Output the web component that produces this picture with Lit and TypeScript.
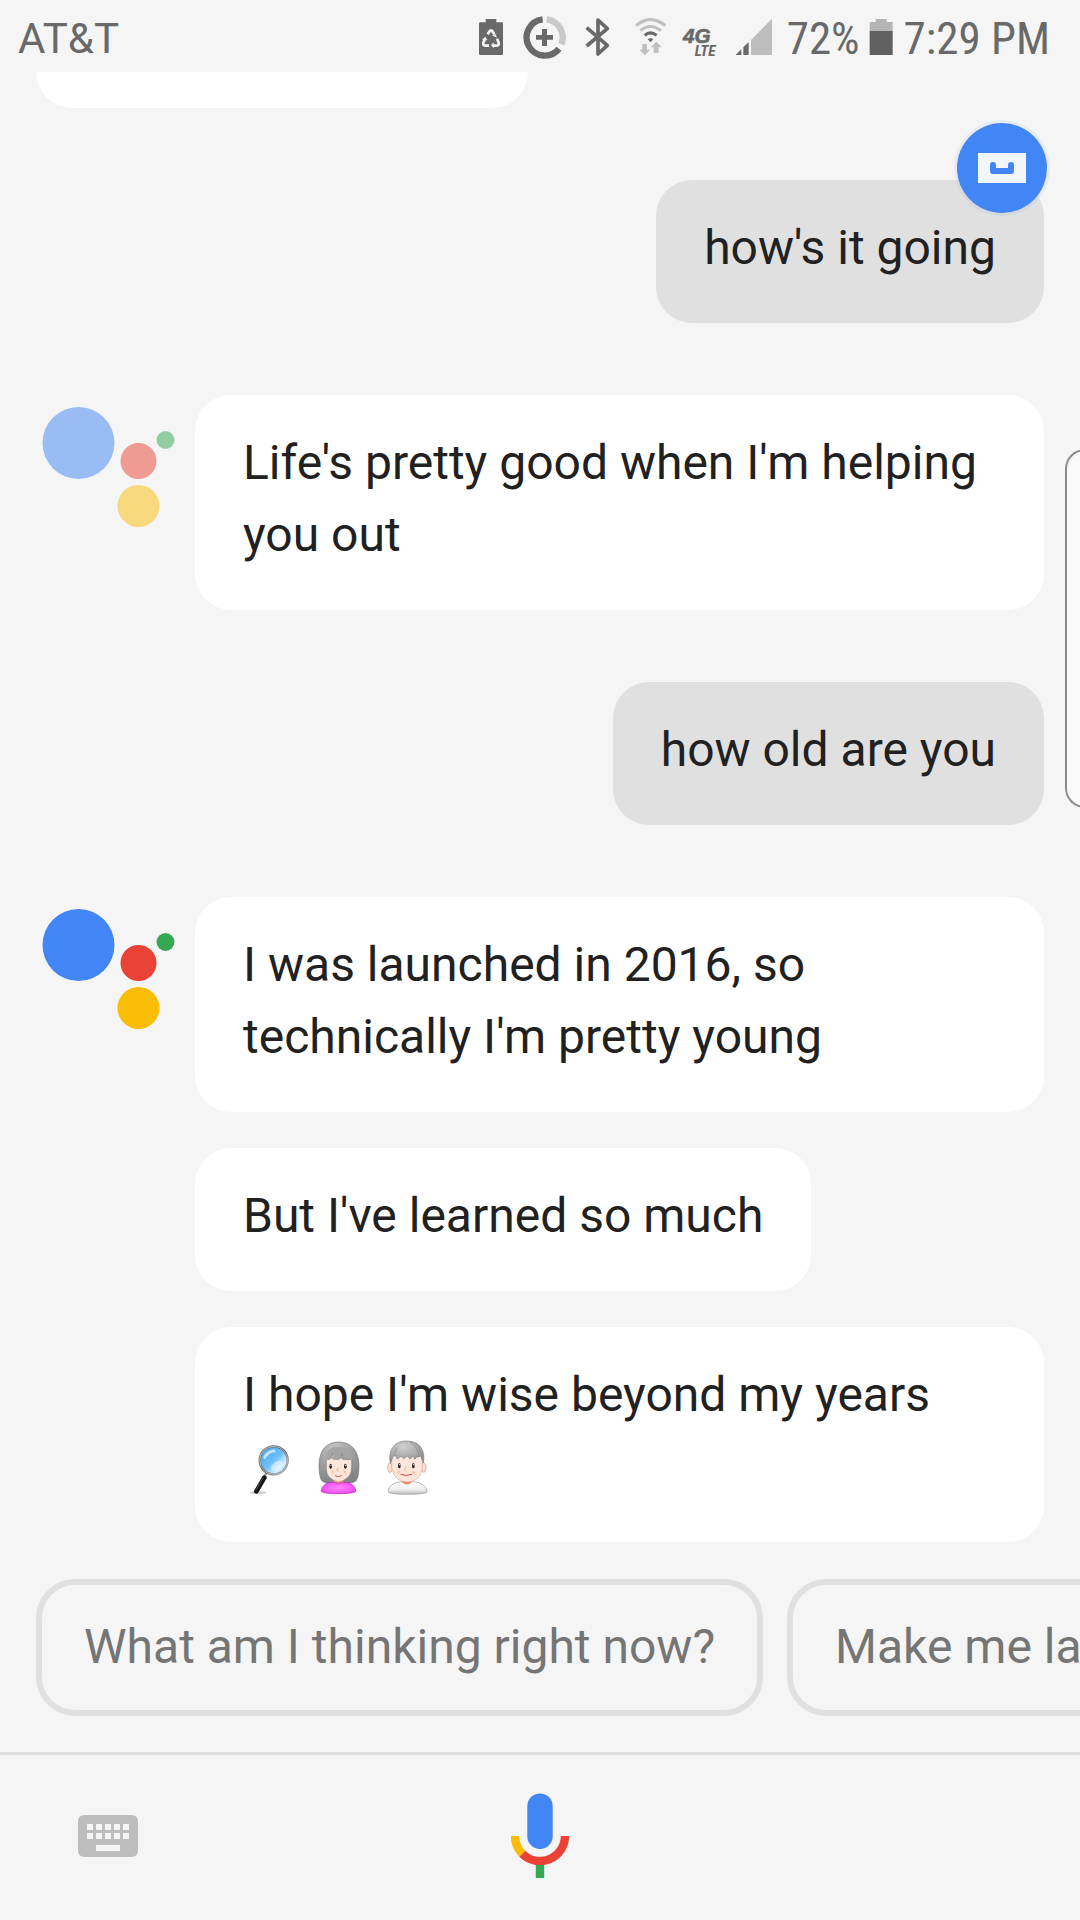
import { LitElement, html, css, svg } from "lit";
import { customElement, property } from "lit/decorators.js";

type Entry =
  | { from: "user"; lines: string[] }
  | { from: "assistant"; lines: string[]; faded?: boolean; emoji?: boolean };

const conversation: Entry[] = [
  { from: "user", lines: ["how's it going"] },
  { from: "assistant", faded: true, lines: ["Life's pretty good when I'm helping you out"] },
  { from: "user", lines: ["how old are you"] },
  {
    from: "assistant",
    emoji: true,
    lines: [
      "I was launched in 2016, so technically I'm pretty young",
      "But I've learned so much",
      "I hope I'm wise beyond my years",
    ],
  },
];

const suggestions = ["What am I thinking right now?", "Make me laugh"];

@customElement("status-bar")
export class StatusBar extends LitElement {
  static styles = css`
    :host {
      display: flex;
      align-items: center;
      height: 72px;
      box-sizing: border-box;
      padding: 2px 30px 0 18px;
      color: #696969;
      font-family: Roboto, sans-serif;
      font-size: 42px;
      line-height: 48px;
      white-space: nowrap;
    }
    .carrier {
      flex: 1;
      padding-top: 4px;
    }
    .tray {
      display: flex;
      align-items: center;
      gap: 9px;
    }
    .icon {
      width: 44px;
      height: 44px;
      display: block;
    }
    .battery {
      width: 26px;
      height: 44px;
      display: block;
    }
    .narrow {
      padding-top: 4px;
      font-family: "Roboto Condensed", "Liberation Sans Narrow", Roboto, sans-serif;
      font-size: 45px;
    }
    .net {
      font-family: "Liberation Sans", Arial, sans-serif;
      font-weight: bold;
      font-style: italic;
    }
    .lte {
      font-family: "Roboto Condensed", "Liberation Sans Narrow", sans-serif;
      font-weight: bold;
      font-style: italic;
    }
  `;

  render() {
    return html`
      <span class="carrier">AT&amp;T</span>
      <div class="tray">
        <svg class="icon" viewBox="27 45 132 132" role="img" aria-label="Power saving">
          <path fill="#696969" d="M77 57h32v10h16q4 0 4 4v90q0 4-4 4H61q-4 0-4-4V71q0-4 4-4h16z" />
          <g fill="none" stroke="#f5f5f5" stroke-width="8" stroke-linejoin="round">
            <path d="M83 103l7-11h6l7 11" />
            <path d="M75 116l-5 12q-2 8 6 9h11" />
            <path d="M111 116l5 12q2 8-6 9H99" />
          </g>
          <path fill="#f5f5f5" d="M96 106l12-3 2 10zM66 119l10-9 6 11zM101 127v18l-8-9z" />
        </svg>
        <svg class="icon" viewBox="186 45 132 132" role="img" aria-label="Data saver">
          <g fill="none" stroke-width="19">
            <path stroke="#696969" d="M248 58A54.500 54.500 0 1 0 297 146" />
            <path stroke="#c9c9c9" d="M260 58A54.500 54.500 0 0 1 304 133" />
          </g>
          <path fill="#696969" d="M246 87h15v18h18v14h-18v19h-15v-19h-18v-14h18z" />
        </svg>
        <svg class="icon" viewBox="345 45 132 132" role="img" aria-label="Bluetooth">
          <path
            fill="none"
            stroke="#696969"
            stroke-width="11"
            stroke-linejoin="round"
            d="M380 83l62 53-28 26V60l28 26-62 52"
          />
        </svg>
        <svg class="icon" viewBox="504 45 132 132" role="img" aria-label="Wi-Fi">
          <g fill="none" stroke-width="9">
            <path stroke="#c0c0c0" d="M528 77q43-36 88 0" />
            <path stroke="#c0c0c0" d="M541 92q30-25 62 0" />
            <path stroke="#696969" d="M554 106q17-15 36 0" />
          </g>
          <path fill="#696969" d="M563 118q9-7 17 0l-8 9z" />
          <path fill="#c0c0c0" d="M547 132h14v17h10l-17 17-16-17h9zM581 159v-17h-9l17-17 16 17h-9v17z" />
        </svg>
        <svg class="icon" viewBox="663 45 132 132" role="img" aria-label="4G LTE">
          <text class="net" x="669" y="130" font-size="62" fill="#696969" stroke="#696969" stroke-width="2">4G</text>
          <text class="lte" x="704" y="168" font-size="46" fill="#696969">LTE</text>
        </svg>
        <svg class="icon" viewBox="822 45 132 132" role="img" aria-label="Signal strength">
          <path fill="#bdbdbd" d="M873 120L936 56V165H873z" />
          <path fill="#696969" d="M827 165l17-17v17zM850 142l16-16v39h-16z" />
        </svg>
        <span class="narrow">72%</span>
        <svg class="battery" viewBox="322 45 78 132" role="img" aria-label="Battery">
          <path fill="#b5b5b5" d="M342 57h33v9h18v29h-69V66h18z" />
          <path fill="#606060" d="M324 93h69v72h-69z" />
        </svg>
        <span class="narrow">7:29 PM</span>
      </div>
    `;
  }
}

@customElement("assistant-mark")
export class AssistantMark extends LitElement {
  @property({ type: Boolean, reflect: true }) faded = false;

  static styles = css`
    :host {
      display: block;
      flex: none;
      width: 159px;
    }
    :host([faded]) {
      opacity: 0.5;
    }
    .dots {
      display: block;
      width: 144px;
      height: 144px;
    }
  `;

  render() {
    return html`
      <svg class="dots" viewBox="0 0 144 144" role="img" aria-label="Assistant">
        <circle cx="42.500" cy="48" r="36" fill="#4285f4" />
        <circle cx="102.500" cy="66" r="18" fill="#ea4335" />
        <circle cx="129.500" cy="45" r="9" fill="#34a853" />
        <circle cx="102.500" cy="111" r="21" fill="#fbbc05" />
      </svg>
    `;
  }
}

const magnifier = svg`
  <defs>
    <linearGradient id="lens" x1="0" y1="0" x2="1" y2="1">
      <stop offset="0" stop-color="#3aa0ee" /><stop offset=".5" stop-color="#6cc0fb" />
      <stop offset=".75" stop-color="#d6f0ff" /><stop offset="1" stop-color="#8fd0fb" />
    </linearGradient>
    <linearGradient id="rim" x1="0" y1="0" x2="1" y2="1">
      <stop offset="0" stop-color="#8c8c8c" /><stop offset=".5" stop-color="#5c5c5c" />
      <stop offset="1" stop-color="#a8a8a8" />
    </linearGradient>
  </defs>
  <ellipse cx="204" cy="518" rx="25" ry="5" fill="#000" opacity=".18" />
  <path d="M229 458l-8 16" stroke="#9a9a9a" stroke-width="7" />
  <path d="M223 473l-24 41" stroke="#151515" stroke-width="14" stroke-linecap="round" />
  <path d="M219 474l-21 36" stroke="#555" stroke-width="3" />
  <circle cx="251" cy="421" r="42" fill="url(#lens)" stroke="url(#rim)" stroke-width="7" />
  <circle cx="251" cy="421" r="42" fill="none" stroke="#d8d8d8" stroke-width="2" />
  <path d="M219 414q7-23 34-26l5 8q-22 1-33 22z" fill="#fff" opacity=".65" />
  <ellipse cx="260" cy="437" rx="20" ry="11" fill="#fff" opacity=".45" transform="rotate(-35 260 437)" />
`;

const woman = svg`
  <defs>
    <radialGradient id="bob" cx=".4" cy=".2" r=".8">
      <stop offset="0" stop-color="#c9c9c9" /><stop offset=".5" stop-color="#a3a3a3" />
      <stop offset="1" stop-color="#858585" />
    </radialGradient>
    <radialGradient id="top">
      <stop offset="0" stop-color="#ff86ff" /><stop offset="1" stop-color="#f04df0" />
    </radialGradient>
  </defs>
  <path d="M387 434C388 391 409 366 446 366s60 25 61 68q0 36-9 49-10 8-25 5h-53q-16 3-25-6-8-14-8-48z" fill="url(#bob)" stroke="#777" stroke-width="2" />
  <path d="M431 475h29v15q-14 10-29 0z" fill="#e99a7e" />
  <path d="M393 513q5-26 37-27 15 9 31 0 32 1 37 27-4 8-53 8-48 0-52-8z" fill="url(#top)" stroke="#b31fbd" stroke-width="2" />
  <path d="M409 416h75v30q-4 33-38 38-34-5-37-38z" fill="#fce5da" />
  <path d="M409 420V396l20-16 38 2 17 18v20q-14 0-25-2l-6-17-5 18q-12 2-22-1l4-16-12 18z" fill="#a5a5a5" />
  <path d="M418 418q8-8 10-20M450 417q3-8 5-16M455 401l4 17h24M409 419l-1 64M486 419l1 64" fill="none" stroke="#7d7d7d" stroke-width="2" />
  <ellipse cx="422" cy="439" rx="4" ry="8" fill="#2c211d" /><circle cx="423" cy="436" r="2" fill="#fff" />
  <ellipse cx="466" cy="439" rx="4" ry="8" fill="#2c211d" /><circle cx="467" cy="436" r="2" fill="#fff" />
  <path d="M446 444l-6 5 5 6M427 461l6-5M424 456l7-4M461 456l6 5M460 452l8 4" fill="none" stroke="#d9a052" stroke-width="2" />
  <path d="M435 467q11 6 20 0" fill="none" stroke="#e05048" stroke-width="3" />
`;

const man = svg`
  <defs>
    <radialGradient id="crop" cx=".4" cy=".25" r=".8">
      <stop offset="0" stop-color="#d0d0d0" /><stop offset=".6" stop-color="#aaa" />
      <stop offset="1" stop-color="#888" />
    </radialGradient>
    <linearGradient id="shirt" x1="0" y1="0" x2="0" y2="1">
      <stop offset="0" stop-color="#fff" /><stop offset=".6" stop-color="#f1f1f1" />
      <stop offset="1" stop-color="#bbb" />
    </linearGradient>
  </defs>
  <path d="M594 515q4-28 42-30 14 9 31 0 40 2 45 30-7 8-59 8-53 0-59-8z" fill="url(#shirt)" stroke="#999" stroke-width="2" />
  <path d="M636 475h29v12q-14 13-29 0z" fill="#e58a66" />
  <ellipse cx="600" cy="443" rx="7" ry="14" fill="#fbdccd" stroke="#c99a85" stroke-width="2" />
  <ellipse cx="701" cy="443" rx="7" ry="14" fill="#fbdccd" stroke="#c99a85" stroke-width="2" />
  <path d="M605 405h92v40q-4 26-22 35-25 13-50-2-16-11-20-33z" fill="#fce5da" stroke="#d5ac98" stroke-width="2" />
  <path d="M601 430c-6-32 5-67 49-67 40 0 57 28 50 66l-8-21-13 4-4 5-6-8-9 8-8-9-11 8-8-8-11 9-5-11-8 3z" fill="url(#crop)" stroke="#7c7c7c" stroke-width="2" />
  <path d="M660 366q25 15 27 43M674 370q17 14 21 36M613 405q2-14 9-22" fill="none" stroke="#858585" stroke-width="2" />
  <ellipse cx="628" cy="437" rx="4" ry="8" fill="#2c211d" /><circle cx="629" cy="434" r="2" fill="#fff" />
  <ellipse cx="670" cy="437" rx="4" ry="8" fill="#2c211d" /><circle cx="671" cy="434" r="2" fill="#fff" />
  <path d="M648 440l-4 9 5 4M620 458l8-5M624 463l7-6M668 454l8 5M667 458l5 5" fill="none" stroke="#d9a052" stroke-width="2" />
  <path d="M632 463q17 7 34 0" fill="none" stroke="#e04438" stroke-width="3" />
`;

@customElement("emoji-row")
export class EmojiRow extends LitElement {
  static styles = css`
    :host {
      display: flex;
      align-items: center;
      gap: 13px;
      height: 72px;
    }
    .emoji {
      width: 56px;
      height: 60px;
    }
  `;

  render() {
    return html`
      <svg class="emoji" viewBox="159 351 168 180" fill="none" role="img" aria-label="Magnifying glass">${magnifier}</svg>
      <svg class="emoji" viewBox="366 351 168 180" role="img" aria-label="Old woman">${woman}</svg>
      <svg class="emoji" viewBox="573 351 168 180" role="img" aria-label="Old man">${man}</svg>
    `;
  }
}

@customElement("app-root")
export class AppRoot extends LitElement {
  static styles = css`
    :host {
      display: flex;
      flex-direction: column;
      position: relative;
      min-height: 100vh;
      overflow: hidden;
      background: #f5f5f5;
      color: #212121;
      font-family: Roboto, sans-serif;
      font-size: 48px;
      line-height: 72px;
    }
    .chat {
      flex: 1;
      display: flex;
      flex-direction: column;
      gap: 72px;
      padding: 0 36px;
    }
    .earlier {
      width: 492px;
      height: 36px;
      border-radius: 0 0 36px 36px;
      background: #fff;
    }
    .turn {
      display: flex;
    }
    .user {
      justify-content: flex-end;
    }
    .replies {
      flex: 1;
      display: flex;
      flex-direction: column;
      align-items: flex-start;
      gap: 36px;
    }
    .bubble {
      padding: 32px 48px 39px;
      border-radius: 36px;
      background: #fff;
    }
    .wide {
      align-self: stretch;
    }
    .user .bubble {
      background: #e0e0e0;
    }
    .text {
      margin: 0;
    }
    .chips {
      display: flex;
      gap: 24px;
      padding: 36px;
      overflow: hidden;
    }
    .chip {
      flex: none;
      margin: 0;
      padding: 26px 42px 27px;
      border: 6px solid #e0e0e0;
      border-radius: 39px;
      background: none;
      color: #757575;
      font: inherit;
      white-space: nowrap;
    }
    .bar {
      display: grid;
      grid-template-columns: 1fr auto 1fr;
      align-items: center;
      padding: 33px 72px 36px;
      border-top: 3px solid #e0e0e0;
    }
    .tool {
      display: block;
      justify-self: start;
      margin: 0;
      padding: 0;
      border: 0;
      background: none;
    }
    .keyboard {
      display: block;
      width: 72px;
      height: 72px;
    }
    .mic {
      display: block;
      width: 96px;
      height: 96px;
    }
    .floating {
      position: absolute;
      top: 120px;
      right: 30px;
      padding: 0;
      border: 0;
      background: none;
    }
    .badge {
      display: block;
      width: 96px;
      height: 96px;
    }
    .edge {
      position: absolute;
      top: 449px;
      right: -6px;
      width: 21px;
      height: 359px;
      box-sizing: border-box;
      border: 2px solid #8c8c8c;
      border-right: 0;
      border-radius: 20px 0 0 20px;
      background: #fafafa;
    }
  `;

  private turn(entry: Entry) {
    if (entry.from === "user") {
      return html`<div class="turn user">
        ${entry.lines.map((t) => html`<div class="bubble"><p class="text">${t}</p></div>`)}
      </div>`;
    }
    const last = entry.lines.length - 1;
    return html`<div class="turn">
      <assistant-mark ?faded=${!!entry.faded}></assistant-mark>
      <div class="replies">
        ${entry.lines.map(
          (t, i) => html`<div class="bubble ${entry.emoji && i === last ? "wide" : ""}">
            <p class="text">${t}</p>
            ${entry.emoji && i === last ? html`<emoji-row></emoji-row>` : ""}
          </div>`
        )}
      </div>
    </div>`;
  }

  render() {
    return html`
      <status-bar></status-bar>
      <main class="chat">
        <div class="earlier"></div>
        ${conversation.map((e) => this.turn(e))}
      </main>
      <div class="chips">
        ${suggestions.map((s) => html`<button class="chip" type="button">${s}</button>`)}
      </div>
      <footer class="bar">
        <button class="tool" type="button" aria-label="Keyboard">
          <svg class="keyboard" viewBox="0 0 24 24">
            <path
              fill="#bdbdbd"
              fill-rule="evenodd"
              d="M4 5h16a2 2 0 0 1 2 2v10a2 2 0 0 1-2 2H4a2 2 0 0 1-2-2V7a2 2 0 0 1 2-2zM5 8v2h2V8zM8 8v2h2V8zM11 8v2h2V8zM14 8v2h2V8zM17 8v2h2V8zM5 11v2h2v-2zM8 11v2h2v-2zM11 11v2h2v-2zM14 11v2h2v-2zM17 11v2h2v-2zM8 15v2h8v-2z"
            />
          </svg>
        </button>
        <button class="tool" type="button" aria-label="Speak">
          <svg class="mic" viewBox="0 0 96 96">
            <rect x="35.300" y="5.400" width="25.400" height="55.600" rx="12.700" fill="#4285f4" />
            <g fill="none" stroke-width="8.400">
              <path stroke="#fbbc05" d="M23 48a25 25 0 0 0 7.320 17.680" />
              <path stroke="#ea4335" d="M73 48a25 25 0 0 1-42.680 17.680" />
            </g>
            <path fill="#34a853" d="M43.800 77h8.400v13h-8.400z" />
          </svg>
        </button>
      </footer>
      <button class="floating" type="button" aria-label="Screen capture">
        <svg class="badge" viewBox="0 0 96 96">
          <circle cx="48" cy="48" r="48" fill="#4285f4" opacity=".08" />
          <circle cx="48" cy="48" r="45" fill="#4285f4" />
          <path fill="#f2f7ff" d="M24 33h48v30H24z" />
          <path
            fill="none"
            stroke="#4285f4"
            stroke-width="6"
            stroke-linecap="round"
            stroke-linejoin="round"
            d="M39 45v6h18v-6"
          />
        </svg>
      </button>
      <div class="edge"></div>
    `;
  }
}
